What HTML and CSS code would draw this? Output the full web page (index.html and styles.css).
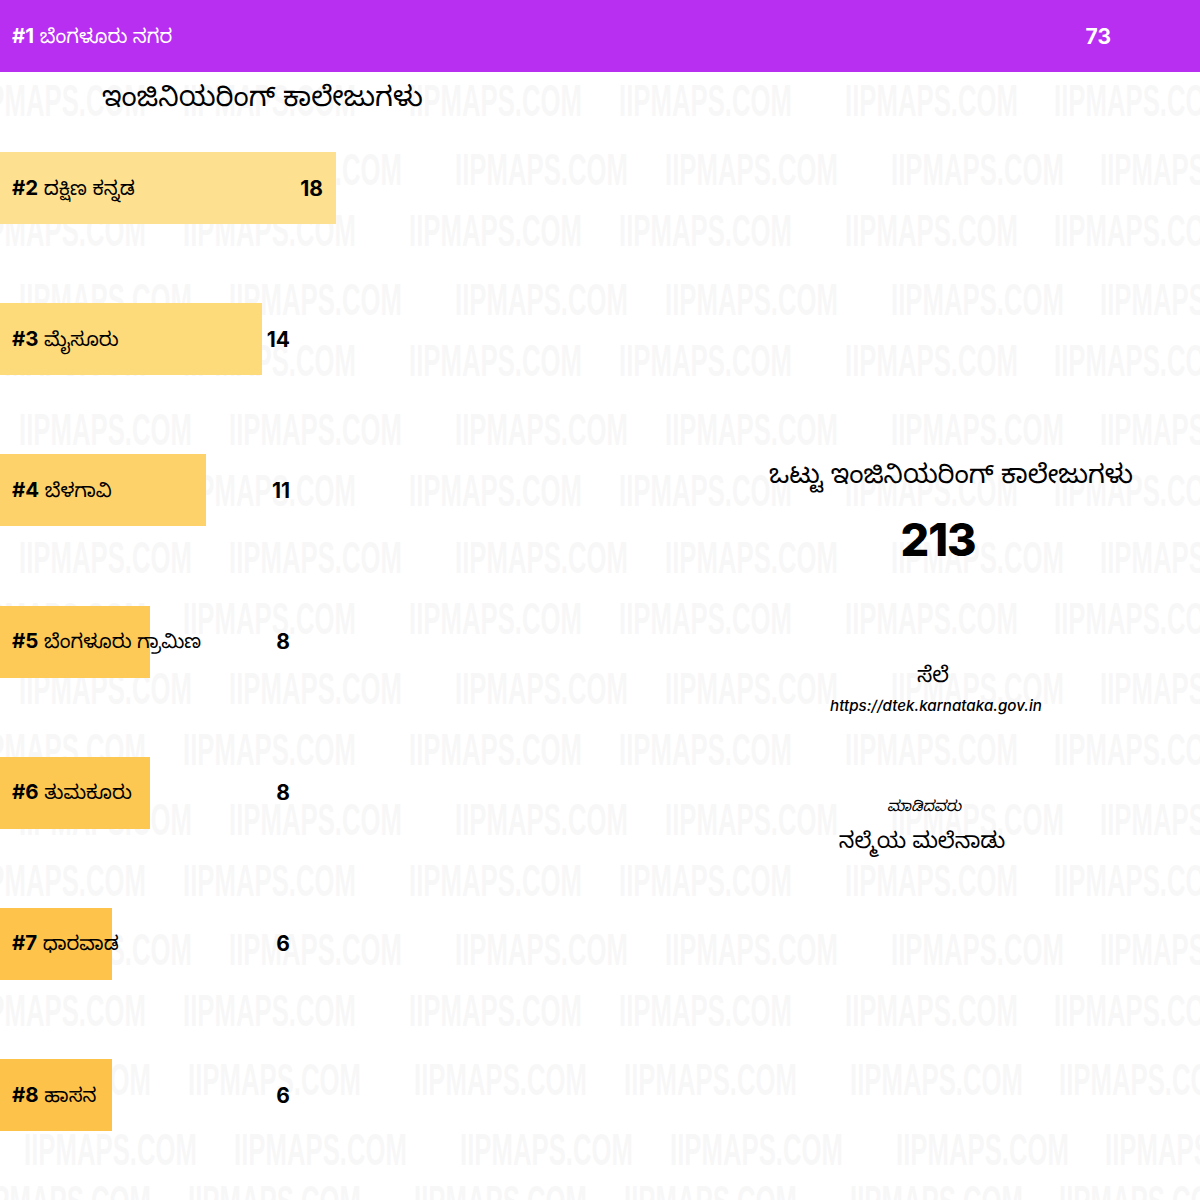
FILE: index.html
```html
<!DOCTYPE html>
<html lang="kn">
<head>
<meta charset="utf-8">
<title>ಇಂಜಿನಿಯರಿಂಗ್ ಕಾಲೇಜುಗಳು</title>
<link rel="stylesheet" href="styles.css">
</head>
<body>
<div class="page">
  <div class="marks" aria-hidden="true">
    <div class="mrow b"><span>IIPMAPS.COM</span><span>IIPMAPS.COM</span><span>IIPMAPS.COM</span><span>IIPMAPS.COM</span><span>IIPMAPS.COM</span><span>IIPMAPS.COM</span></div>
    <div class="mrow a"><span>IIPMAPS.COM</span><span>IIPMAPS.COM</span><span>IIPMAPS.COM</span><span>IIPMAPS.COM</span><span>IIPMAPS.COM</span><span>IIPMAPS.COM</span></div>
    <div class="mrow b"><span>IIPMAPS.COM</span><span>IIPMAPS.COM</span><span>IIPMAPS.COM</span><span>IIPMAPS.COM</span><span>IIPMAPS.COM</span><span>IIPMAPS.COM</span></div>
    <div class="mrow a"><span>IIPMAPS.COM</span><span>IIPMAPS.COM</span><span>IIPMAPS.COM</span><span>IIPMAPS.COM</span><span>IIPMAPS.COM</span><span>IIPMAPS.COM</span></div>
    <div class="mrow b"><span>IIPMAPS.COM</span><span>IIPMAPS.COM</span><span>IIPMAPS.COM</span><span>IIPMAPS.COM</span><span>IIPMAPS.COM</span><span>IIPMAPS.COM</span></div>
    <div class="mrow a"><span>IIPMAPS.COM</span><span>IIPMAPS.COM</span><span>IIPMAPS.COM</span><span>IIPMAPS.COM</span><span>IIPMAPS.COM</span><span>IIPMAPS.COM</span></div>
    <div class="mrow b"><span>IIPMAPS.COM</span><span>IIPMAPS.COM</span><span>IIPMAPS.COM</span><span>IIPMAPS.COM</span><span>IIPMAPS.COM</span><span>IIPMAPS.COM</span></div>
    <div class="mrow a"><span>IIPMAPS.COM</span><span>IIPMAPS.COM</span><span>IIPMAPS.COM</span><span>IIPMAPS.COM</span><span>IIPMAPS.COM</span><span>IIPMAPS.COM</span></div>
    <div class="mrow b"><span>IIPMAPS.COM</span><span>IIPMAPS.COM</span><span>IIPMAPS.COM</span><span>IIPMAPS.COM</span><span>IIPMAPS.COM</span><span>IIPMAPS.COM</span></div>
    <div class="mrow a"><span>IIPMAPS.COM</span><span>IIPMAPS.COM</span><span>IIPMAPS.COM</span><span>IIPMAPS.COM</span><span>IIPMAPS.COM</span><span>IIPMAPS.COM</span></div>
    <div class="mrow b"><span>IIPMAPS.COM</span><span>IIPMAPS.COM</span><span>IIPMAPS.COM</span><span>IIPMAPS.COM</span><span>IIPMAPS.COM</span><span>IIPMAPS.COM</span></div>
    <div class="mrow a"><span>IIPMAPS.COM</span><span>IIPMAPS.COM</span><span>IIPMAPS.COM</span><span>IIPMAPS.COM</span><span>IIPMAPS.COM</span><span>IIPMAPS.COM</span></div>
    <div class="mrow b"><span>IIPMAPS.COM</span><span>IIPMAPS.COM</span><span>IIPMAPS.COM</span><span>IIPMAPS.COM</span><span>IIPMAPS.COM</span><span>IIPMAPS.COM</span></div>
    <div class="mrow a"><span>IIPMAPS.COM</span><span>IIPMAPS.COM</span><span>IIPMAPS.COM</span><span>IIPMAPS.COM</span><span>IIPMAPS.COM</span><span>IIPMAPS.COM</span></div>
    <div class="mrow b"><span>IIPMAPS.COM</span><span>IIPMAPS.COM</span><span>IIPMAPS.COM</span><span>IIPMAPS.COM</span><span>IIPMAPS.COM</span><span>IIPMAPS.COM</span></div>
    <div class="mrow b2"><span>IIPMAPS.COM</span><span>IIPMAPS.COM</span><span>IIPMAPS.COM</span><span>IIPMAPS.COM</span><span>IIPMAPS.COM</span><span>IIPMAPS.COM</span></div>
    <div class="mrow a2"><span>IIPMAPS.COM</span><span>IIPMAPS.COM</span><span>IIPMAPS.COM</span><span>IIPMAPS.COM</span><span>IIPMAPS.COM</span><span>IIPMAPS.COM</span></div>
    <div class="mrow b2"><span>IIPMAPS.COM</span><span>IIPMAPS.COM</span><span>IIPMAPS.COM</span><span>IIPMAPS.COM</span><span>IIPMAPS.COM</span><span>IIPMAPS.COM</span></div>
  </div>
  <div class="content">
    <div class="row top"><div class="fill fill-top"></div><span class="name"><b>#1</b> ಬೆಂಗಳೂರು ನಗರ</span><span class="val val-top">73</span></div>
    <main class="main">
      <section class="left">
        <h1 class="title">ಇಂಜಿನಿಯರಿಂಗ್ ಕಾಲೇಜುಗಳು</h1>
        <div class="rows">
          <div class="row wide"><div class="fill c2" style="width:336px"></div><span class="name"><b>#2</b> ದಕ್ಷಿಣ ಕನ್ನಡ</span><span class="val">18</span></div>
          <div class="row"><div class="fill c3" style="width:262px"></div><span class="name"><b>#3</b> ಮೈಸೂರು</span><span class="val">14</span></div>
          <div class="row"><div class="fill c4" style="width:206px"></div><span class="name"><b>#4</b> ಬೆಳಗಾವಿ</span><span class="val">11</span></div>
          <div class="row"><div class="fill c5" style="width:150px"></div><span class="name"><b>#5</b> ಬೆಂಗಳೂರು ಗ್ರಾಮಿಣ</span><span class="val">8</span></div>
          <div class="row"><div class="fill c6" style="width:150px"></div><span class="name"><b>#6</b> ತುಮಕೂರು</span><span class="val">8</span></div>
          <div class="row"><div class="fill c7" style="width:112px"></div><span class="name"><b>#7</b> ಧಾರವಾಡ</span><span class="val">6</span></div>
          <div class="row"><div class="fill c8" style="width:112px"></div><span class="name"><b>#8</b> ಹಾಸನ</span><span class="val">6</span></div>
        </div>
      </section>
      <aside class="side">
        <div class="total-label">ಒಟ್ಟು ಇಂಜಿನಿಯರಿಂಗ್ ಕಾಲೇಜುಗಳು</div>
        <div class="total">213</div>
        <div class="source-label">ಸೆಲೆ</div>
        <div class="source">https://dtek.karnataka.gov.in</div>
        <div class="by-label">ಮಾಡಿದವರು</div>
        <div class="by">ನಲ್ಮೆಯ ಮಲೆನಾಡು</div>
      </aside>
    </main>
  </div>
</div>
</body>
</html>
```
FILE: styles.css
```css
* { box-sizing: border-box; }
html, body { margin: 0; padding: 0; background: #fff; }
body { font-family: "Inter", "Noto Sans Kannada", "Noto Sans", sans-serif; color: #000; }
.page { position: relative; width: 1200px; height: 1200px; overflow: hidden; }
.content { position: relative; z-index: 1; }

.row { position: relative; display: flex; align-items: center; justify-content: space-between; width: 303px; height: 72px; padding: 0 13px 0 12px; font-size: 19.6px; font-weight: 400; white-space: nowrap; }
.row.wide { width: 336px; }
.row.top { width: 100%; color: #fff; padding-right: 89px; }
.fill { position: absolute; top: 0; left: 0; height: 100%; opacity: 0.92; }
.fill-top { width: 100%; background: #b31df1; }
.name, .val { position: relative; }
.name { padding-top: 4px; }
.name b { font-weight: 700; font-size: 20.5px; }
.val { font-weight: 700; font-size: 21px; }
.c2 { background: #fdde88; }
.c3 { background: #fdd76f; }
.c4 { background: #fdce5d; }
.c5 { background: #fdc549; }
.c6 { background: #fdc343; }
.c7 { background: #fdbe3b; }
.c8 { background: #fdbd3a; }

.main { display: flex; }
.left { width: 700px; }
.title { margin: 0; height: 80px; padding: 7px 0 0 102px; font-size: 27.6px; line-height: 34px; font-weight: 400; }
.rows { display: flex; flex-direction: column; gap: 79.2px; }

.side { flex: 1; display: flex; flex-direction: column; align-items: center; padding-top: 380px; }
.total-label { margin-right: -2px; font-size: 26px; line-height: 44px; font-weight: 400; }
.total { margin-top: 15px; margin-right: 24px; font-size: 45px; line-height: 58px; font-weight: 800; letter-spacing: -1px; }
.source-label { margin-top: 91px; margin-right: 34px; font-size: 21.7px; line-height: 28px; font-weight: 400; }
.source { margin-top: 7px; margin-right: 28px; font-size: 15.2px; line-height: 22px; font-style: italic; font-weight: 500; }
.by-label { margin-top: 79px; margin-right: 52px; font-size: 15px; line-height: 20px; font-style: italic; }
.by { margin-top: 9px; margin-right: 56px; font-size: 22px; line-height: 30px; font-weight: 400; }

.marks { position: absolute; top: 79px; left: 0; width: 1200px; z-index: 0; font-family: "Liberation Sans", sans-serif; font-weight: 700; font-size: 45px; color: #000; opacity: 0.028; }
.mrow { display: flex; height: 61px; line-height: 44px; }
.mrow.b { height: 69px; margin-left: -27px; }
.mrow.a { padding-left: 19px; }
.mrow.a2 { padding-left: 24px; height: 52px; }
.mrow.b2 { margin-left: -22px; height: 70px; }
.mrow:nth-child(7) { height: 67px; }
.mrow:nth-child(9), .mrow:nth-child(11) { height: 70px; }
.mrow span { display: block; width: 172px; flex: none; white-space: nowrap; transform: scaleX(0.572); transform-origin: left center; }
.mrow span:nth-child(2) { margin-left: 38px; }
.mrow span:nth-child(3) { margin-left: 54px; }
.mrow span:nth-child(4) { margin-left: 38px; }
.mrow span:nth-child(5) { margin-left: 54px; }
.mrow span:nth-child(6) { margin-left: 37px; }
```
